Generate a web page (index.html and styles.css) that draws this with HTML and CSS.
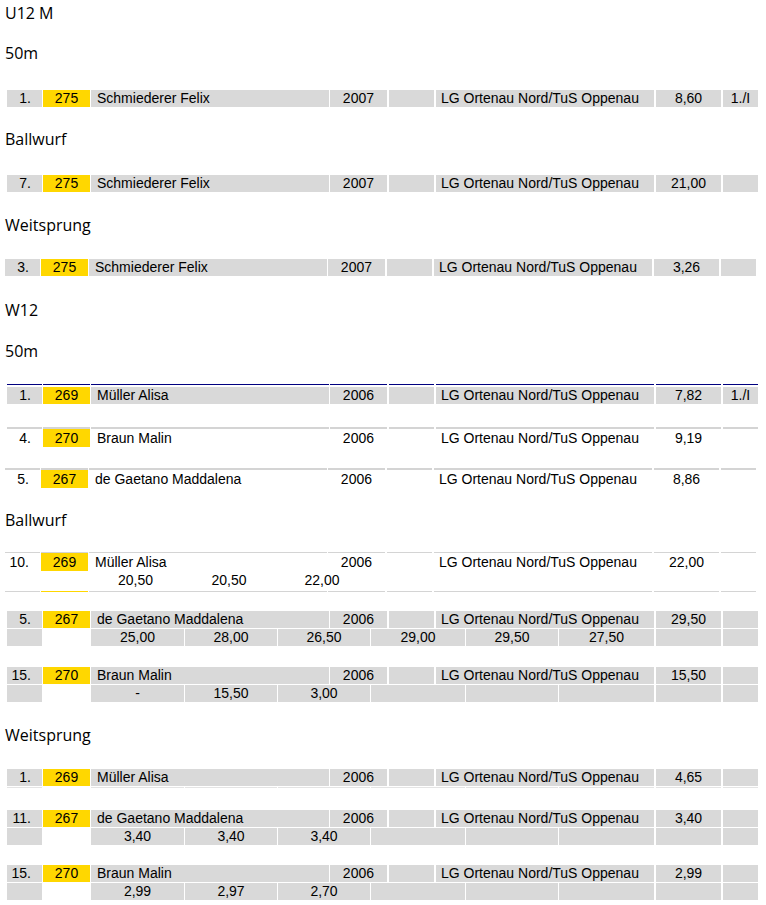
FILE: index.html
```html
<!DOCTYPE html>
<html lang="de">
<head>
<meta charset="utf-8">
<title>Ergebnisse</title>
<link rel="stylesheet" href="styles.css">
</head>
<body>

<div class="h mt3">U12 M</div>
<div class="h mt20">50m</div>
<div class="tbl mt27">
  <div class="row gray">
    <div class="c c1">1.</div><div class="c c2 y">275</div><div class="c c3">Schmiederer Felix</div><div class="c c4">2007</div><div class="c c5"></div><div class="c c6">LG Ortenau Nord/TuS Oppenau</div><div class="c c7">8,60</div><div class="c c8">1./I</div>
  </div>
</div>

<div class="h mt22">Ballwurf</div>
<div class="tbl mt26">
  <div class="row gray">
    <div class="c c1">7.</div><div class="c c2 y">275</div><div class="c c3">Schmiederer Felix</div><div class="c c4">2007</div><div class="c c5"></div><div class="c c6">LG Ortenau Nord/TuS Oppenau</div><div class="c c7">21,00</div><div class="c c8"></div>
  </div>
</div>

<div class="h mt23">Weitsprung</div>
<div class="tbl mt24 shift">
  <div class="row gray">
    <div class="c c1">3.</div><div class="c c2 y">275</div><div class="c c3">Schmiederer Felix</div><div class="c c4">2007</div><div class="c c5"></div><div class="c c6">LG Ortenau Nord/TuS Oppenau</div><div class="c c7">3,26</div><div class="c c8"></div>
  </div>
</div>

<div class="h mt24">W12</div>
<div class="h mt21">50m</div>
<div class="tbl mt23">
  <div class="row ln blue gap2">
    <div class="c c1"></div><div class="c c2"></div><div class="c c3"></div><div class="c c4"></div><div class="c c5"></div><div class="c c6"></div><div class="c c7"></div><div class="c c8"></div>
  </div>
  <div class="row gray">
    <div class="c c1">1.</div><div class="c c2 y">269</div><div class="c c3">Müller Alisa</div><div class="c c4">2006</div><div class="c c5"></div><div class="c c6">LG Ortenau Nord/TuS Oppenau</div><div class="c c7">7,82</div><div class="c c8">1./I</div>
  </div>
</div>
<div class="tbl mt23">
  <div class="row ln lite thick">
    <div class="c c1"></div><div class="c c2"></div><div class="c c3"></div><div class="c c4"></div><div class="c c5"></div><div class="c c6"></div><div class="c c7"></div><div class="c c8"></div>
  </div>
  <div class="row white">
    <div class="c c1">4.</div><div class="c c2 y">270</div><div class="c c3">Braun Malin</div><div class="c c4">2006</div><div class="c c5"></div><div class="c c6">LG Ortenau Nord/TuS Oppenau</div><div class="c c7">9,19</div><div class="c c8"></div>
  </div>
</div>
<div class="tbl mt21 shift">
  <div class="row ln lite thick">
    <div class="c c1"></div><div class="c c2"></div><div class="c c3"></div><div class="c c4"></div><div class="c c5"></div><div class="c c6"></div><div class="c c7"></div><div class="c c8"></div>
  </div>
  <div class="row white">
    <div class="c c1">5.</div><div class="c c2 y">267</div><div class="c c3">de Gaetano Maddalena</div><div class="c c4">2006</div><div class="c c5"></div><div class="c c6">LG Ortenau Nord/TuS Oppenau</div><div class="c c7">8,86</div><div class="c c8"></div>
  </div>
</div>

<div class="h mt22">Ballwurf</div>
<div class="tbl mt22 shift">
  <div class="row ln lite">
    <div class="c c1"></div><div class="c c2"></div><div class="c c3"></div><div class="c c4"></div><div class="c c5"></div><div class="c c6"></div><div class="c c7"></div><div class="c c8"></div>
  </div>
  <div class="row white">
    <div class="c c1">10.</div><div class="c c2 y">269</div><div class="c c3">Müller Alisa</div><div class="c c4">2006</div><div class="c c5"></div><div class="c c6">LG Ortenau Nord/TuS Oppenau</div><div class="c c7">22,00</div><div class="c c8"></div>
  </div>
  <div class="row sub white tall">
    <div class="c c1"></div><div class="c c2"></div><div class="c a1">20,50</div><div class="c a2">20,50</div><div class="c a3">22,00</div><div class="c a4"></div><div class="c a5"></div><div class="c a6"></div><div class="c c7"></div><div class="c c8"></div>
  </div>
  <div class="row ln lite">
    <div class="c c1"></div><div class="c c2 y"></div><div class="c c3"></div><div class="c c4"></div><div class="c c5"></div><div class="c c6"></div><div class="c c7"></div><div class="c c8"></div>
  </div>
</div>
<div class="tbl mt19">
  <div class="row gray gap1">
    <div class="c c1">5.</div><div class="c c2 y">267</div><div class="c c3">de Gaetano Maddalena</div><div class="c c4">2006</div><div class="c c5"></div><div class="c c6">LG Ortenau Nord/TuS Oppenau</div><div class="c c7">29,50</div><div class="c c8"></div>
  </div>
  <div class="row sub gray">
    <div class="c c1"></div><div class="c c2 w"></div><div class="c a1">25,00</div><div class="c a2">28,00</div><div class="c a3">26,50</div><div class="c a4">29,00</div><div class="c a5">29,50</div><div class="c a6">27,50</div><div class="c c7"></div><div class="c c8"></div>
  </div>
</div>
<div class="tbl mt21">
  <div class="row gray gap1">
    <div class="c c1">15.</div><div class="c c2 y">270</div><div class="c c3">Braun Malin</div><div class="c c4">2006</div><div class="c c5"></div><div class="c c6">LG Ortenau Nord/TuS Oppenau</div><div class="c c7">15,50</div><div class="c c8"></div>
  </div>
  <div class="row sub gray">
    <div class="c c1"></div><div class="c c2 w"></div><div class="c a1">-</div><div class="c a2">15,50</div><div class="c a3">3,00</div><div class="c a4"></div><div class="c a5"></div><div class="c a6"></div><div class="c c7"></div><div class="c c8"></div>
  </div>
</div>

<div class="h mt23">Weitsprung</div>
<div class="tbl mt24">
  <div class="row gray gap1">
    <div class="c c1">1.</div><div class="c c2 y">269</div><div class="c c3">Müller Alisa</div><div class="c c4">2006</div><div class="c c5"></div><div class="c c6">LG Ortenau Nord/TuS Oppenau</div><div class="c c7">4,65</div><div class="c c8"></div>
  </div>
  <div class="row sub ln faint">
    <div class="c c1"></div><div class="c c2"></div><div class="c a1"></div><div class="c a2"></div><div class="c a3"></div><div class="c a4"></div><div class="c a5"></div><div class="c a6"></div><div class="c c7"></div><div class="c c8"></div>
  </div>
</div>
<div class="tbl mt22">
  <div class="row gray gap1">
    <div class="c c1">11.</div><div class="c c2 y">267</div><div class="c c3">de Gaetano Maddalena</div><div class="c c4">2006</div><div class="c c5"></div><div class="c c6">LG Ortenau Nord/TuS Oppenau</div><div class="c c7">3,40</div><div class="c c8"></div>
  </div>
  <div class="row sub gray">
    <div class="c c1"></div><div class="c c2 w"></div><div class="c a1">3,40</div><div class="c a2">3,40</div><div class="c a3">3,40</div><div class="c a4"></div><div class="c a5"></div><div class="c a6"></div><div class="c c7"></div><div class="c c8"></div>
  </div>
</div>
<div class="tbl mt20">
  <div class="row gray gap1">
    <div class="c c1">15.</div><div class="c c2 y">270</div><div class="c c3">Braun Malin</div><div class="c c4">2006</div><div class="c c5"></div><div class="c c6">LG Ortenau Nord/TuS Oppenau</div><div class="c c7">2,99</div><div class="c c8"></div>
  </div>
  <div class="row sub gray">
    <div class="c c1"></div><div class="c c2 w"></div><div class="c a1">2,99</div><div class="c a2">2,97</div><div class="c a3">2,70</div><div class="c a4"></div><div class="c a5"></div><div class="c a6"></div><div class="c c7"></div><div class="c c8"></div>
  </div>
</div>

</body>
</html>
```

FILE: styles.css
```css
* {
  box-sizing: border-box;
}

html, body {
  margin: 0;
  padding: 0;
  background: #ffffff;
}

body {
  width: 766px;
  color: #000000;
}

/* Headings (Calibri-like) */
.h {
  font-family: "Open Sans", "Noto Sans", sans-serif;
  font-size: 16px;
  line-height: 20px;
  height: 20px;
  padding-left: 5px;
  color: #000000;
}

/* vertical rhythm helpers */
.mt3 { margin-top: 3px; }
.mt19 { margin-top: 19px; }
.mt20 { margin-top: 20px; }
.mt21 { margin-top: 21px; }
.mt22 { margin-top: 22px; }
.mt23 { margin-top: 23px; }
.mt24 { margin-top: 24px; }
.mt26 { margin-top: 26px; }
.mt27 { margin-top: 27px; }

/* Result tables */
.tbl {
  font-family: "Liberation Sans", Arial, sans-serif;
  font-size: 14px;
  color: #000000;
}

.row {
  display: flex;
  padding-left: 7px;
}

.tbl.shift .row {
  padding-left: 5px;
}

.row.gap1 { margin-bottom: 1px; }
.row.gap2 { margin-bottom: 2px; }

.c {
  flex: none;
  height: 17px;
  line-height: 17px;
  white-space: nowrap;
  overflow: hidden;
}

.row.white .c {
  height: 18px;
  padding-top: 1px;
  line-height: 17px;
}

.row.white.tall .c {
  height: 20px;
}

/* colours */
.row.gray .c { background: #d9d9d9; }
.row.gray .c.w { background: #ffffff; }
.row .c.y { background: #ffd700; }

.row.ln .c { height: 1px; }
.row.ln.thick .c { height: 2px; }
.row.ln.blue .c { background: #000080; }
.row.ln.lite .c { background: #d4d4d4; }
.row.ln.lite .c.y { background: #ffd700; }
.row.ln.faint .c { background: #e4e4e4; }
.row.ln.faint .c.c2 { background: #ffffff; }

/* main columns */
.c1 {
  width: 35px;
  text-align: right;
  padding-right: 11px;
}
.c2 {
  width: 47px;
  margin-left: 1px;
  text-align: center;
}
.c3 {
  width: 238px;
  margin-left: 1px;
  padding-left: 6px;
}
.c4 {
  width: 57px;
  margin-left: 1px;
  text-align: right;
  padding-right: 13px;
}
.c5 {
  width: 45px;
  margin-left: 2px;
}
.c6 {
  width: 218px;
  margin-left: 2px;
  padding-left: 5px;
}
.c7 {
  width: 65px;
  margin-left: 2px;
  text-align: center;
}
.c8 {
  width: 35px;
  margin-left: 2px;
  text-align: center;
}

/* attempt columns */
.a1, .a2, .a3, .a4, .a5, .a6 {
  margin-left: 1px;
  text-align: center;
}
.a1 { width: 93px; }
.a2 { width: 92px; }
.a3 { width: 92px; }
.a4 { width: 94px; }
.a5 { width: 92px; }
.a6 { width: 95px; }
```
